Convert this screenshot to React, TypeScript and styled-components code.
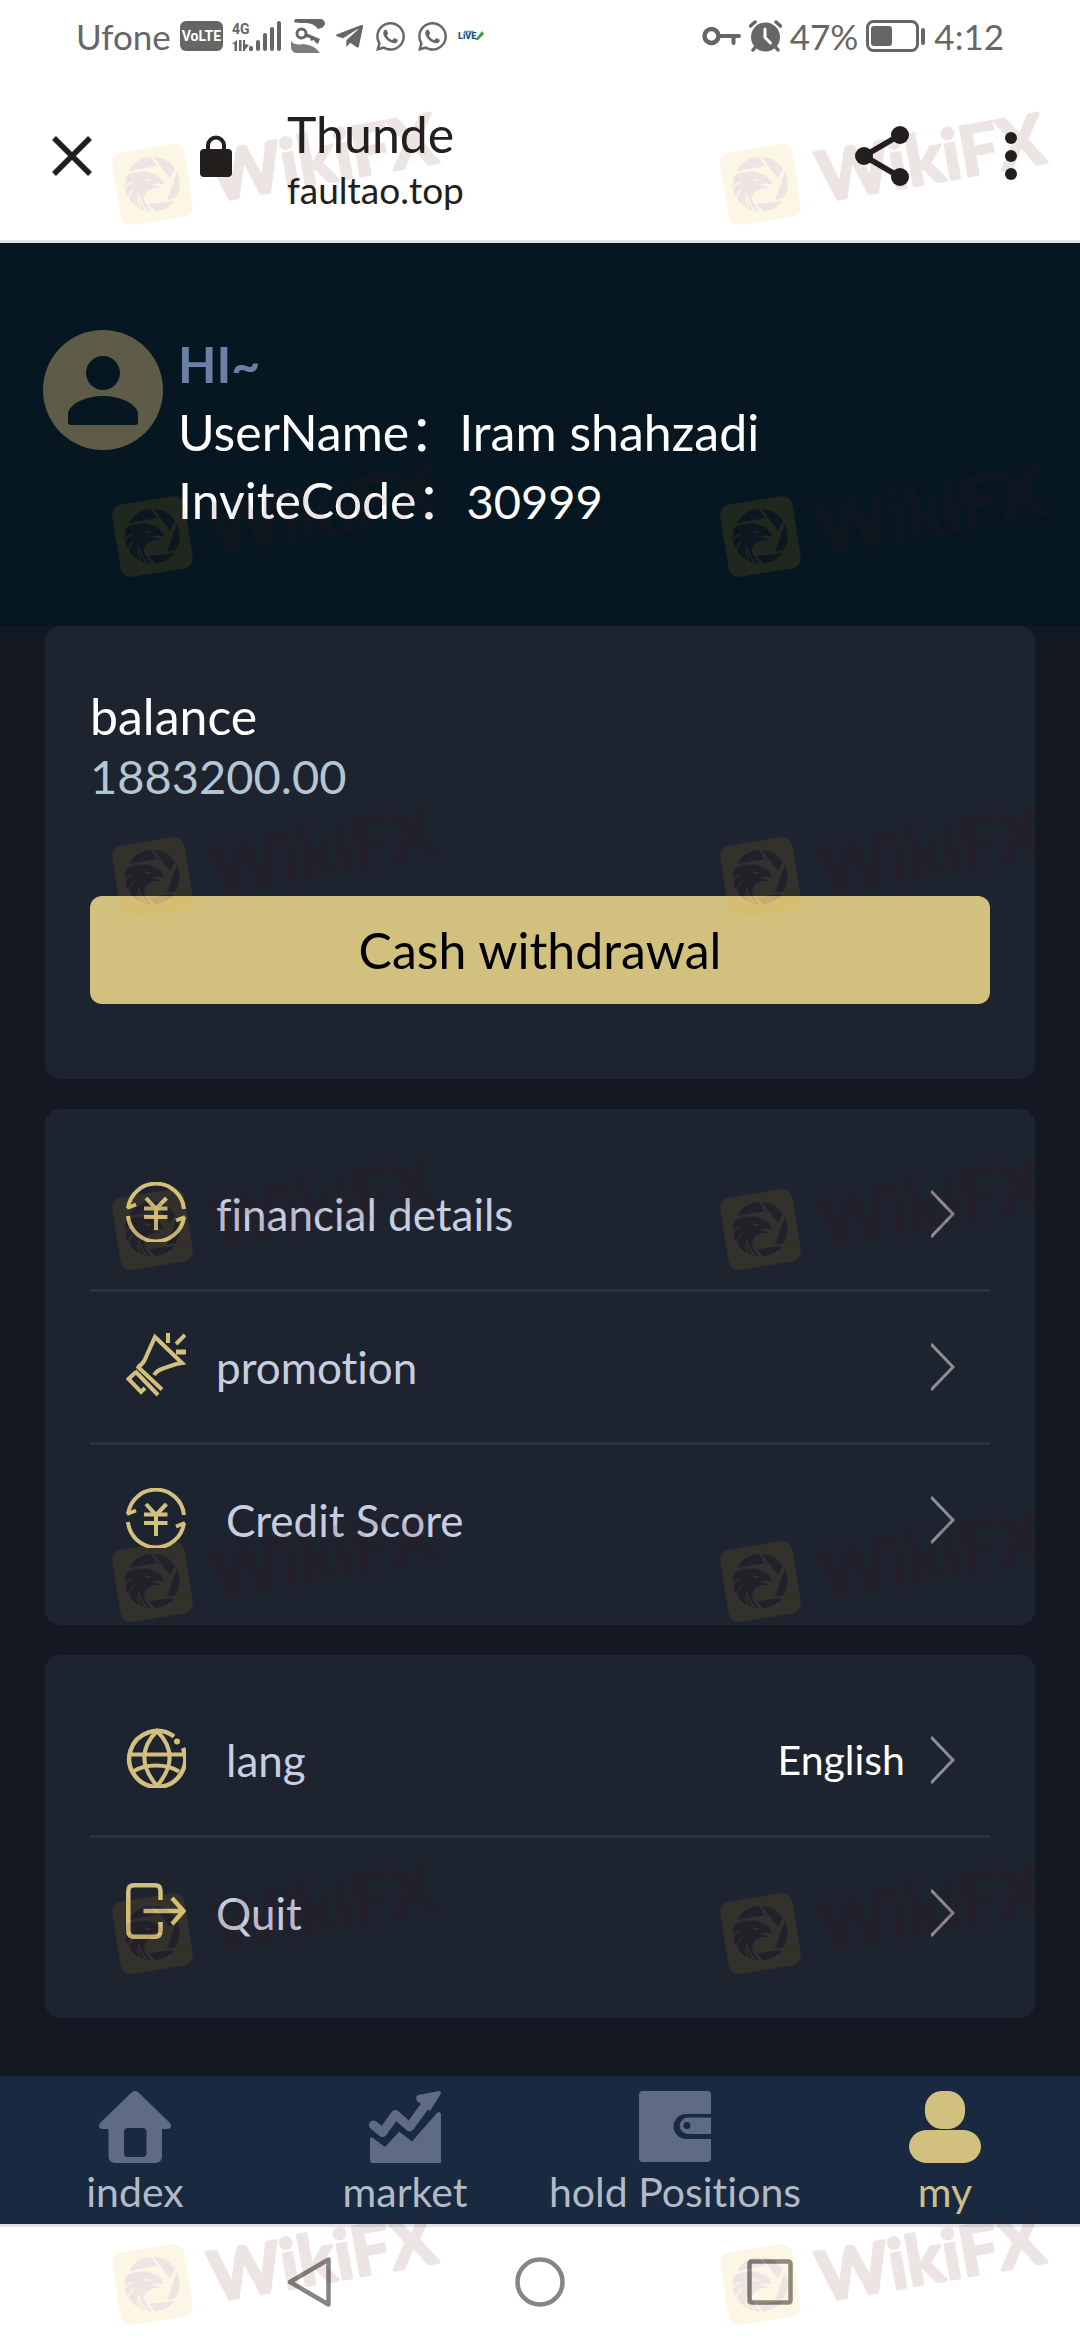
import React from "react";
import styled, { createGlobalStyle } from "styled-components";
import { FaTelegramPlane, FaWhatsapp } from "react-icons/fa";

const color = {
  page: "#141822",
  hero: "#071722",
  card: "#1e2330",
  divider: "#2b3141",
  gold: "#d2c07f",
  menuText: "#c8cde0",
  tabBar: "#182940",
  tabIcon: "#5f6b84",
  tabText: "#b3bac6",
  status: "#666666",
  ink: "#202020",
};

const GlobalStyle = createGlobalStyle`
  * { box-sizing: border-box; }
  body {
    margin: 0;
    background: #ffffff;
    font-family: Lato, "Noto Sans CJK SC", sans-serif;
    font-variant-ligatures: none;
  }
  button {
    margin: 0;
    padding: 0;
    border: 0;
    background: none;
    font: inherit;
    color: inherit;
    cursor: pointer;
  }
  svg { display: block; flex: none; }
  p, h1, h2 { margin: 0; font-size: inherit; font-weight: 400; }
`;

const Screen = styled.div`
  position: relative;
  display: flex;
  flex-direction: column;
  min-height: 100vh;
`;

/* ---------- status bar ---------- */

const StatusBar = styled.div`
  display: flex;
  justify-content: space-between;
  align-items: center;
  height: 72px;
  padding: 0 76px;
  color: ${color.status};
  font-size: 35px;
  line-height: 44px;
`;

const StatusGroup = styled.div<{ $gap: number }>`
  display: flex;
  align-items: center;
  gap: ${(p) => p.$gap}px;
`;

const VolteBadge = styled.span`
  display: flex;
  align-items: center;
  justify-content: center;
  width: 43px;
  height: 30px;
  border-radius: 6px;
  background: ${color.status};
  color: #ffffff;
  font: 700 14px/30px "Liberation Sans Narrow", Roboto, sans-serif;
`;

/* ---------- browser header ---------- */

const BrowserHeader = styled.header`
  display: flex;
  align-items: center;
  height: 171px;
  padding: 0 63px 0 52px;
  border-bottom: 3px solid #dfe3e3;
  color: ${color.ink};
`;

const PageIdentity = styled.div`
  display: flex;
  flex: 1;
  align-items: center;
  gap: 55px;
  margin-left: 108px;
`;

const TitleBlock = styled.div`
  padding-top: 10px;
`;

const PageTitle = styled.h1`
  font-size: 50px;
  line-height: 58px;
`;

const PageHost = styled.p`
  font-size: 37px;
  line-height: 54px;
`;

const HeaderActions = styled.div`
  display: flex;
  align-items: center;
  gap: 96px;
`;

/* ---------- profile ---------- */

const Profile = styled.section`
  display: flex;
  gap: 15px;
  padding: 87px 43px 92px;
  background: ${color.hero};
`;

const ProfileText = styled.div`
  color: #ffffff;
  font-size: 50px;
  line-height: 68px;
`;

const Greeting = styled.h2`
  color: #6c80a5;
  font-weight: 700;
`;

const Digits = styled.span`
  font-size: 47px;
  line-height: 1;
`;

/* ---------- cards ---------- */

const Content = styled.main`
  display: flex;
  flex: 1;
  flex-direction: column;
  gap: 30px;
  padding: 0 45px 58px;
  background: ${color.page};
`;

const Card = styled.section`
  border-radius: 15px;
  background: ${color.card};
`;

const BalanceCard = styled(Card)`
  padding: 60px 45px 75px;
  font-size: 50px;
  line-height: 60px;
`;

const BalanceLabel = styled.p`
  color: #ffffff;
`;

const BalanceValue = styled.p`
  color: #b3c6d2;
  font-size: 47px;
`;

const WithdrawButton = styled.button`
  width: 100%;
  height: 108px;
  margin-top: 90px;
  border-radius: 12px;
  background: ${color.gold};
  color: #000000;
`;

const MenuCard = styled(Card)`
  padding: 30px 45px;
`;

const MenuRow = styled.button`
  display: flex;
  align-items: center;
  justify-content: space-between;
  width: 100%;
  height: 150px;
  padding: 0 35px 0 36px;
  text-align: left;

  & + & {
    height: 153px;
    border-top: 3px solid ${color.divider};
  }
`;

const MenuLead = styled.span<{ $wide?: boolean }>`
  display: flex;
  align-items: center;
  gap: ${(p) => (p.$wide ? 40 : 30)}px;
  color: ${color.menuText};
  font-size: 44px;
  line-height: 60px;

  svg {
    margin-bottom: 4px;
    color: ${color.gold};
  }
`;

const MenuTail = styled.span`
  display: flex;
  align-items: center;
  gap: 26px;
  color: #ffffff;
  font-size: 41px;
  line-height: 60px;
`;

/* ---------- tab bar ---------- */

const TabBar = styled.nav`
  display: grid;
  grid-template-columns: repeat(4, 1fr);
  padding: 15px 0 3px;
  background: ${color.tabBar};
`;

const Tab = styled.button<{ $active?: boolean }>`
  display: flex;
  flex-direction: column;
  align-items: center;
  color: ${(p) => (p.$active ? "#cdbf88" : color.tabText)};
  font-size: 41px;
  line-height: 58px;
  white-space: nowrap;

  svg { color: ${(p) => (p.$active ? color.gold : color.tabIcon)}; }
`;

const SystemNav = styled.div`
  display: flex;
  justify-content: center;
  align-items: flex-start;
  gap: 180px;
  padding: 30px 0 33px;
  border-top: 3px solid #e0e2e4;
  background: #ffffff;
  color: #858585;
`;

/* ---------- watermark ---------- */

const Mark = styled.svg<{ $x: number; $y: number }>`
  position: absolute;
  left: ${(p) => p.$x}px;
  top: ${(p) => p.$y}px;
  width: 360px;
  height: 150px;
  opacity: 0.1;
  overflow: visible;
  pointer-events: none;
`;

const MARK_COLUMNS = [105, 713];
const MARK_ROWS = [80, 432, 773, 1125, 1477, 1829, 2180];

const Watermark = ({ x, y }: { x: number; y: number }) => (
  <Mark $x={x} $y={y} viewBox="0 -25 360 150" aria-hidden="true">
    <rect x="11" y="43" width="73" height="73" rx="10" fill="#ebb00a" transform="rotate(-9 47.5 79.5)" />
    <g fill="#4b1008">
      <path d="M24 66 A27.5 27.5 0 0 1 45.5 51.6 L52 61 Z" />
      <path d="M48.5 51.6 L64.8 73.3 L70 64 A27.5 27.5 0 0 0 48.5 51.6 Z" />
      <path d="M71.8 67 L62 95 L70.6 93.5 A27.5 27.5 0 0 0 71.8 67 Z" />
      <path d="M69.5 96 L44 99 L50 106.4 A27.5 27.5 0 0 0 69.5 96 Z" />
      <path d="M20 76 C20 72 22 69 26 68.5 C33 66 42 66 46 68 C53 70 58 74 59 80 C55 78 51 78 47 79.5 C51 82 55 81 56 83 C47 82 40 87 39 92 C39 98 44 102 46.5 106.5 A27.5 27.5 0 0 1 20 76 Z" />
    </g>
    <g fill="none" stroke="#ebb00a" strokeWidth="1.4">
      <path d="M40 73.5 Q43 76.5 46 74.5" />
      <path d="M19 84 Q22 79 28 77" />
      <path d="M23 93 Q24 88 29 84" />
      <path d="M37 106 Q31 98 34 91 Q36 99 42 106" />
    </g>
    <text
      x="109"
      y="97"
      transform="rotate(-10 109 97)"
      fill="#4b1008"
      stroke="#4b1008"
      strokeWidth="3"
      strokeLinejoin="round"
      fontFamily="Lato, sans-serif"
      fontWeight="700"
      fontSize="69"
    >
      WikiFX
    </text>
  </Mark>
);

/* ---------- status icons ---------- */

const SignalIcon = () => (
  <svg width="50" height="32" viewBox="0 0 50 32" fill="currentColor">
    <text x="0" y="14" fontFamily="Roboto, sans-serif" fontWeight="700" fontSize="14">4G</text>
    <path d="M0 24 L5 20 V31 H2.500 V24 Z M7 20 H9.500 V31 H7 Z M11 20 H13 V24 L17 25 L13 30 V31 H11 Z" />
    <rect x="17" y="26" width="4" height="5" rx="1.500" />
    <rect x="24" y="20" width="4" height="11" rx="2" />
    <rect x="31" y="13" width="4" height="18" rx="2" />
    <rect x="38" y="7" width="4" height="24" rx="2" />
    <rect x="45" y="1" width="4" height="30" rx="2" />
  </svg>
);

const KeyPhotoIcon = () => (
  <svg width="34" height="34" viewBox="0 0 34 34" fill="currentColor">
    <path d="M4 0 H30 Q34 1 34 5 Q33 9 27 10 Q22 3 13 4 Q6 4 3 3 Z" />
    <path d="M0 22 Q4 27 12 25 Q24 26 29 34 H5 Q0 33 0 28 Z" opacity="0.85" />
    <circle cx="10.500" cy="14.500" r="4.500" fill="none" stroke="currentColor" strokeWidth="3" />
    <path d="M15 14 L29 20 L27 25 L24 23 L23 21 L20 22 L19 19 L14 18 Z" />
  </svg>
);

const LiveIcon = () => (
  <svg width="26" height="14" viewBox="0 0 26 14">
    <text x="0" y="10" fontFamily="Roboto, sans-serif" fontWeight="900" fontSize="9" fill="#1d4f86">LiVE</text>
    <path d="M6 2.500 H16" stroke="#4fa3c4" strokeWidth="1.500" />
    <path d="M17 11 L24 2 L26 5 L20 11 Z" fill="#3f9a4a" />
  </svg>
);

const VpnKeyIcon = () => (
  <svg width="39" height="20" viewBox="0 0 39 20" fill="none" stroke="currentColor">
    <circle cx="9.500" cy="10" r="7" strokeWidth="4.500" />
    <path d="M18 10 H37 M31.500 10 V17" strokeWidth="4" strokeLinecap="round" />
  </svg>
);

const AlarmIcon = () => (
  <svg width="33" height="32" viewBox="0 0 33 32">
    <circle cx="16.500" cy="17" r="14.500" fill="currentColor" />
    <path d="M1.500 6 L6 2 M31.500 6 L27 2 M4 30 L6.500 27 M29 30 L26.500 27" stroke="currentColor" strokeWidth="3.500" strokeLinecap="round" />
    <path d="M16 9 V17.500 L21.500 23" fill="none" stroke="#ffffff" strokeWidth="3" strokeLinecap="round" strokeLinejoin="round" />
  </svg>
);

const BatteryIcon = () => (
  <svg width="60" height="32" viewBox="0 0 60 32" fill="currentColor">
    <rect x="1.500" y="1.500" width="50" height="29" rx="6" fill="none" stroke="currentColor" strokeWidth="3" />
    <rect x="5" y="6" width="21" height="20" rx="3" />
    <rect x="55" y="8" width="4" height="17" rx="2" />
  </svg>
);

/* ---------- header icons ---------- */

const CloseIcon = () => (
  <svg width="40" height="42" viewBox="0 0 40 42" stroke="currentColor" strokeWidth="5.500">
    <path d="M2 3 L38 39 M38 3 L2 39" />
  </svg>
);

const LockIcon = () => (
  <svg width="32" height="42" viewBox="0 0 32 42">
    <rect x="0" y="14" width="32" height="28" rx="4" fill="currentColor" />
    <path d="M8 16 V10.500 A8 8 0 0 1 24 10.500 V16" fill="none" stroke="currentColor" strokeWidth="4" />
  </svg>
);

const ShareIcon = () => (
  <svg width="54" height="60" viewBox="0 0 54 60">
    <path d="M45 9 L9 30 L45 51" fill="none" stroke="currentColor" strokeWidth="5.500" />
    <circle cx="45" cy="9" r="9" fill="currentColor" />
    <circle cx="9" cy="30" r="9" fill="currentColor" />
    <circle cx="45" cy="51" r="9" fill="currentColor" />
  </svg>
);

const MoreIcon = () => (
  <svg width="12" height="48" viewBox="0 0 12 48" fill="currentColor">
    <circle cx="6" cy="6" r="6" />
    <circle cx="6" cy="24" r="6" />
    <circle cx="6" cy="42" r="6" />
  </svg>
);

/* ---------- content icons ---------- */

const Avatar = () => (
  <svg width="120" height="120" viewBox="0 0 120 120">
    <circle cx="60" cy="60" r="60" fill="#5e5c48" />
    <circle cx="60" cy="43" r="17" fill={color.hero} />
    <path d="M25 92 V83 C27 73 44 66 60 66 C76 66 93 73 95 83 V92 Q95 95 92 95 H28 Q25 95 25 92 Z" fill={color.hero} />
  </svg>
);

const YenIcon = () => (
  <svg width="60" height="60" viewBox="0 0 60 60" fill="none" stroke="currentColor" strokeWidth="4">
    <path d="M2 26 A28.200 28.200 0 0 1 58 27" />
    <path d="M2 34 A28.200 28.200 0 0 0 58 35" />
    <path d="M1 26 L10 22.500 M59 35 L50 38.500" />
    <path d="M20 16 L30 27 L40.500 16 M30 27 V48 M18 26.500 H41.500 M18 35 H41.500" />
  </svg>
);

const MegaphoneIcon = () => (
  <svg width="60" height="64" viewBox="0 0 60 64" fill="none" stroke="currentColor" strokeWidth="4">
    <path d="M12 34 C17 31 19 27 20 24 L29 4 L56 30 C48 31 42 34 37 35.500 C32 37 30 39 28 42" />
    <path d="M11 33 L36 56.500 M9 38 L32 62" />
    <path d="M10 39 L2.500 46 L15 59 L19 55" />
    <path d="M42 0 V10 M59 2 L50 11" />
    <path d="M50 19 H60" strokeWidth="5" />
  </svg>
);

const GlobeIcon = () => (
  <svg width="60" height="60" viewBox="0 0 60 60" fill="none" stroke="currentColor" strokeWidth="4">
    <path d="M48 8.500 A28 28 0 1 0 57 20" strokeWidth="4.500" />
    <path d="M31 3 C14 20 14 38 31 58 C48 38 48 20 31 3 Z" />
    <path d="M2 26.500 H58" />
    <path d="M7 43.500 C20 35.500 40 35.500 53 43.500" />
    <circle cx="51" cy="13.500" r="3" fill="currentColor" stroke="none" />
  </svg>
);

const QuitIcon = () => (
  <svg width="60" height="56" viewBox="0 0 60 56" fill="none" stroke="currentColor" strokeWidth="4.500">
    <path d="M34.500 17 V8 Q34.500 2.300 29 2.300 H8 Q2.300 2.300 2.300 8 V48 Q2.300 53.700 8 53.700 H29 Q34.500 53.700 34.500 48 V39" />
    <path d="M17.500 28 H57 M46 15 L57.500 28 L46 41" />
  </svg>
);

const Chevron = () => (
  <svg width="24" height="48" viewBox="0 0 24 48" fill="none" stroke="#8d8e94" strokeWidth="3">
    <path d="M0 1 L22 24 L0 47" />
  </svg>
);

/* ---------- tab icons ---------- */

const HomeIcon = () => (
  <svg width="72" height="72" viewBox="0 0 72 72" fill="currentColor">
    <path
      fillRule="evenodd"
      d="M32 2 Q36 -2 40 2 L71 32 Q74 38 68 38 H63 V65 Q63 72 56 72 H16.500 Q9.500 72 9.500 65 V38 H4 Q-2 38 1 32 Z M29 37 Q25 37 25 41 V62 Q25 66 29 66 H43.500 Q47.500 66 47.500 62 V41 Q47.500 37 43.500 37 Z"
    />
  </svg>
);

const MarketIcon = () => (
  <svg width="72" height="72" viewBox="0 0 72 72" fill="currentColor">
    <path d="M1 48 Q2 45 4 47 L16 56 L29 42 Q30 40 32 42 L43 50.500 L67 23 Q70 19 72 23 V72 H4 Q1 72 1 69 Z" />
    <path d="M4.500 34 L13.500 41.500 L26.500 23.500 L40.500 36 L58 12" fill="none" stroke="currentColor" strokeWidth="9" strokeLinecap="round" strokeLinejoin="round" />
    <path d="M49 4 L70 0 Q73 0 71 4 L61 20 L48 10 Q46 5 49 4 Z" />
  </svg>
);

const WalletIcon = () => (
  <svg width="72" height="72" viewBox="0 0 72 72" fill="currentColor">
    <path
      fillRule="evenodd"
      d="M4 0 H68 Q72 0 72 4 V23 H47 A12.500 12.500 0 0 0 47 48 H72 V67 Q72 71 68 71 H4 Q0 71 0 67 V4 Q0 0 4 0 Z M72 26.500 H49 A8.250 8.250 0 0 0 49 43 H72 Z M48 31 A3.500 3.500 0 0 1 48 38 A3.500 3.500 0 0 1 48 31 Z"
    />
  </svg>
);

const PersonIcon = () => (
  <svg width="72" height="72" viewBox="0 0 72 72" fill="currentColor">
    <rect x="16" y="0" width="40" height="38" rx="17" />
    <rect x="0" y="39" width="72" height="33" rx="18" />
  </svg>
);

/* ---------- page ---------- */

type MenuItem = {
  label: string;
  icon: React.ReactNode;
  wide?: boolean;
  value?: string;
};

const accountItems: MenuItem[] = [
  { label: "financial details", icon: <YenIcon /> },
  { label: "promotion", icon: <MegaphoneIcon /> },
  { label: "Credit Score", icon: <YenIcon />, wide: true },
];

const settingItems: MenuItem[] = [
  { label: "lang", icon: <GlobeIcon />, wide: true, value: "English" },
  { label: "Quit", icon: <QuitIcon /> },
];

const tabs = [
  { label: "index", icon: <HomeIcon /> },
  { label: "market", icon: <MarketIcon /> },
  { label: "hold Positions", icon: <WalletIcon /> },
  { label: "my", icon: <PersonIcon />, active: true },
];

const Menu = ({ items }: { items: MenuItem[] }) => (
  <MenuCard>
    {items.map((item) => (
      <MenuRow key={item.label} type="button">
        <MenuLead $wide={item.wide}>
          {item.icon}
          <span>{item.label}</span>
        </MenuLead>
        <MenuTail>
          {item.value && <span>{item.value}</span>}
          <Chevron />
        </MenuTail>
      </MenuRow>
    ))}
  </MenuCard>
);

export default function App() {
  return (
    <Screen>
      <GlobalStyle />
      <StatusBar>
        <StatusGroup $gap={9}>
          <span>Ufone</span>
          <VolteBadge>VoLTE</VolteBadge>
          <SignalIcon />
          <KeyPhotoIcon />
          <FaTelegramPlane size={31} />
          <FaWhatsapp size={33} />
          <FaWhatsapp size={33} />
          <LiveIcon />
        </StatusGroup>
        <StatusGroup $gap={8}>
          <VpnKeyIcon />
          <AlarmIcon />
          <span>47%</span>
          <BatteryIcon />
          <span>4:12</span>
        </StatusGroup>
      </StatusBar>

      <BrowserHeader>
        <button type="button" aria-label="Close">
          <CloseIcon />
        </button>
        <PageIdentity>
          <LockIcon />
          <TitleBlock>
            <PageTitle>Thunde</PageTitle>
            <PageHost>faultao.top</PageHost>
          </TitleBlock>
        </PageIdentity>
        <HeaderActions>
          <button type="button" aria-label="Share">
            <ShareIcon />
          </button>
          <button type="button" aria-label="More">
            <MoreIcon />
          </button>
        </HeaderActions>
      </BrowserHeader>

      <Profile>
        <Avatar />
        <ProfileText>
          <Greeting>HI~</Greeting>
          <p>UserName：Iram shahzadi</p>
          <p>
            InviteCode：<Digits>30999</Digits>
          </p>
        </ProfileText>
      </Profile>

      <Content>
        <BalanceCard>
          <BalanceLabel>balance</BalanceLabel>
          <BalanceValue>1883200.00</BalanceValue>
          <WithdrawButton type="button">Cash withdrawal</WithdrawButton>
        </BalanceCard>
        <Menu items={accountItems} />
        <Menu items={settingItems} />
      </Content>

      <TabBar>
        {tabs.map((tab) => (
          <Tab key={tab.label} type="button" $active={tab.active}>
            {tab.icon}
            <span>{tab.label}</span>
          </Tab>
        ))}
      </TabBar>

      <SystemNav>
        <button type="button" aria-label="Back">
          <svg width="50" height="50" viewBox="0 0 50 50" fill="none" stroke="currentColor" strokeWidth="4.500" strokeLinejoin="round">
            <path d="M5 25 L43.500 2.500 V47.500 Z" />
          </svg>
        </button>
        <button type="button" aria-label="Home">
          <svg width="50" height="50" viewBox="0 0 50 50" fill="none" stroke="currentColor" strokeWidth="4.500">
            <circle cx="25" cy="25" r="22.500" />
          </svg>
        </button>
        <button type="button" aria-label="Recent apps">
          <svg width="50" height="50" viewBox="0 0 50 50" fill="none" stroke="currentColor" strokeWidth="4.500">
            <rect x="4.500" y="4.500" width="41" height="41" rx="2" />
          </svg>
        </button>
      </SystemNav>

      {MARK_ROWS.map((y) => MARK_COLUMNS.map((x) => <Watermark key={`${x}-${y}`} x={x} y={y} />))}
    </Screen>
  );
}
